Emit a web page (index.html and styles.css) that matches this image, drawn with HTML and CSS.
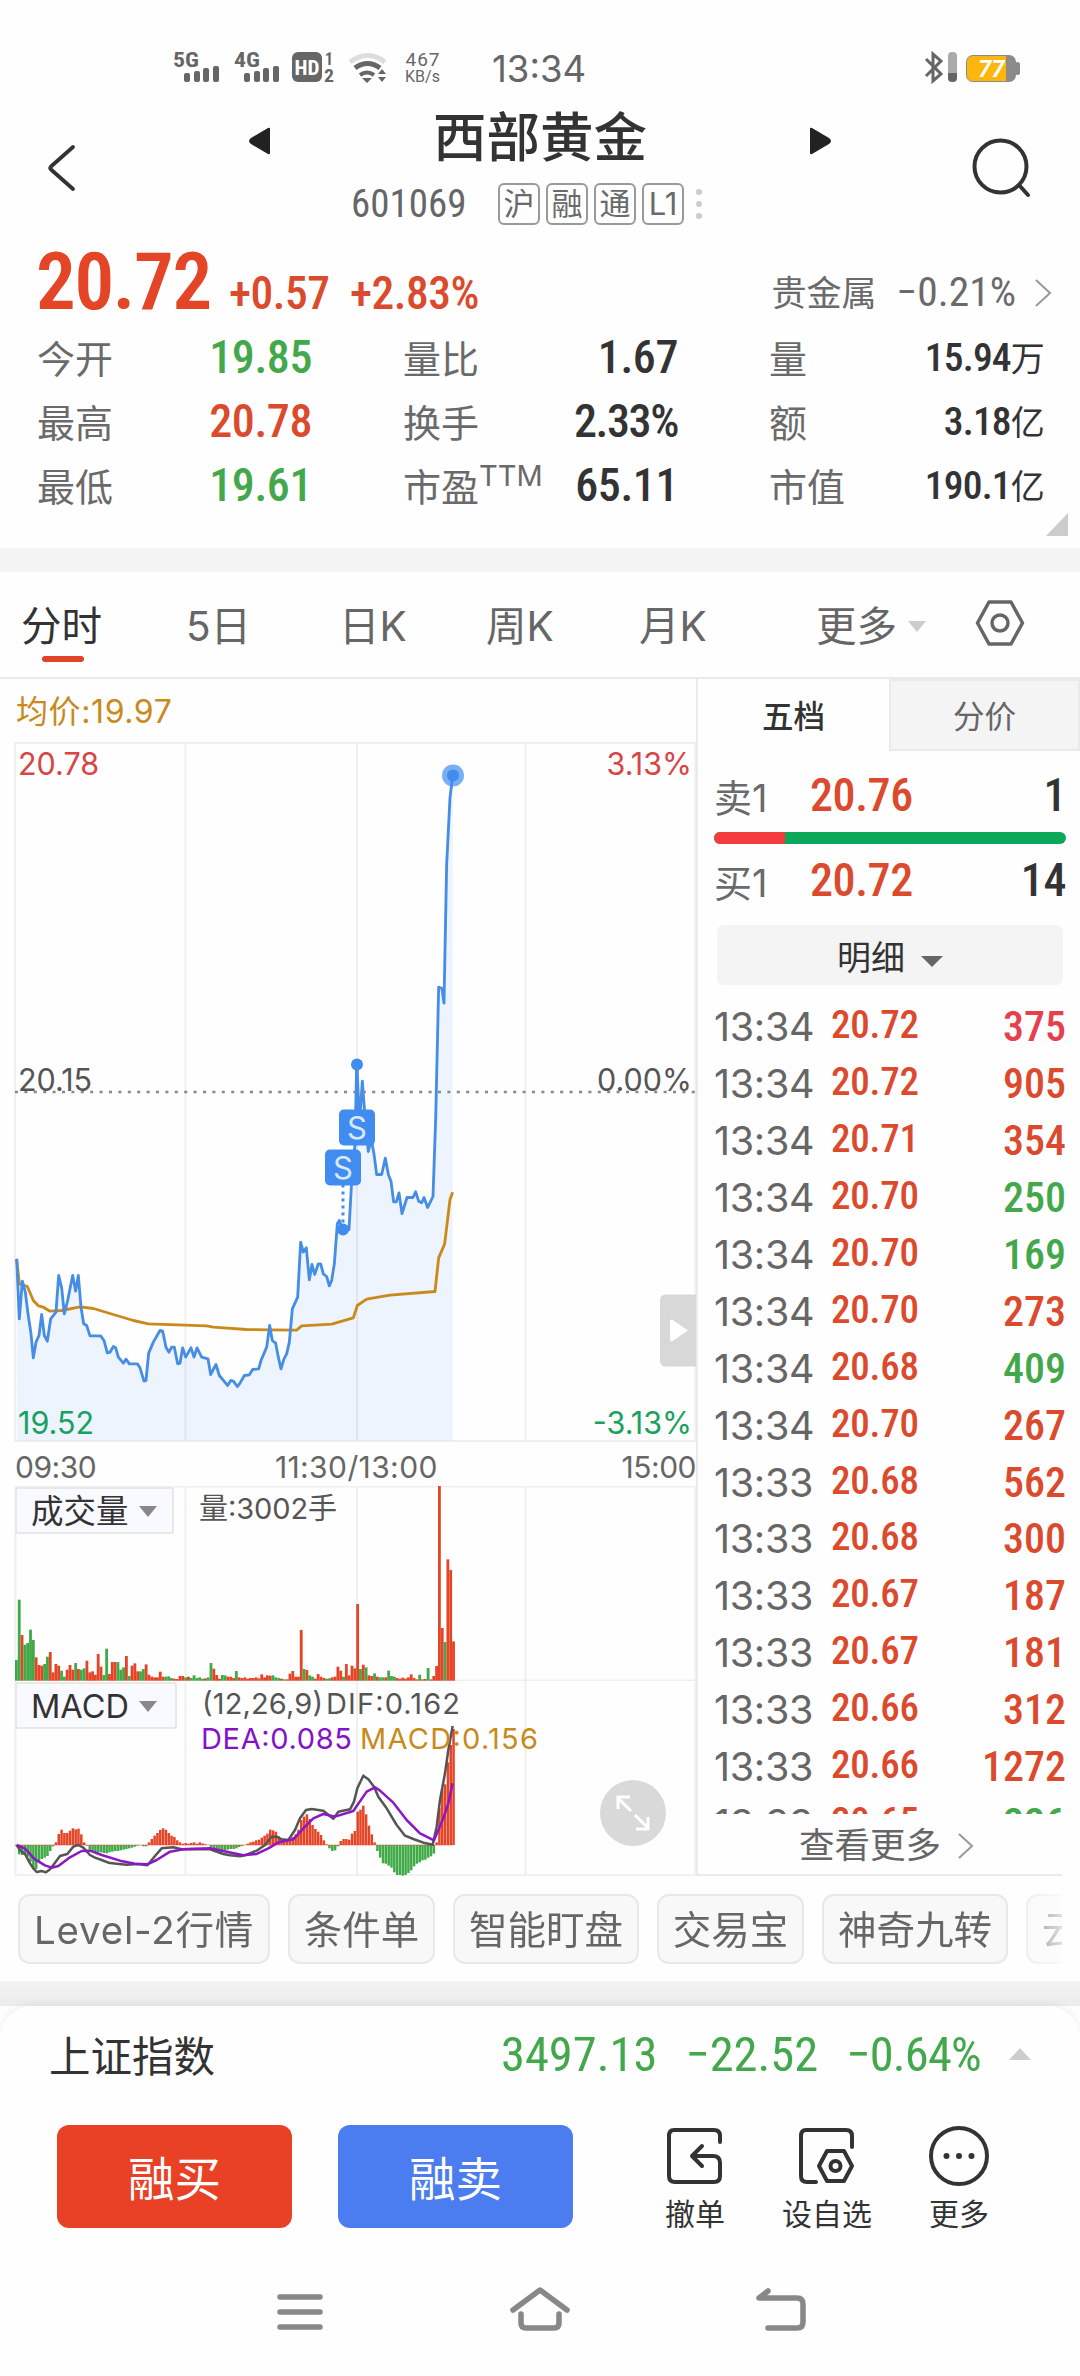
FILE: index.html
```html
<!DOCTYPE html>
<html lang="zh">
<head>
    <meta charset="UTF-8">
    <meta name="viewport" content="width=device-width, initial-scale=1.0">
    <title>西部黄金 601069</title>
    <link rel="stylesheet" href="styles.css">
</head>
<body>
    <div id="statusbar">
        <svg class="status-left" width="270" height="40" viewBox="172 46 270 40">
            <g fill="#666" class="status-bold">
                <text x="173" y="67" font-size="21" textLength="26" lengthAdjust="spacingAndGlyphs">5G</text>
                <rect x="184" y="73" width="6" height="9" rx="2"/><rect x="194" y="71" width="6" height="11" rx="2"/><rect x="203" y="68" width="6" height="14" rx="2"/><rect x="213" y="66" width="6" height="16" rx="2"/>
                <text x="234" y="67" font-size="21" textLength="26" lengthAdjust="spacingAndGlyphs">4G</text>
                <rect x="244" y="73" width="6" height="9" rx="2"/><rect x="254" y="71" width="6" height="11" rx="2"/><rect x="263" y="68" width="6" height="14" rx="2"/><rect x="273" y="66" width="6" height="16" rx="2"/>
                <rect x="292" y="52" width="30" height="30" rx="6"/>
                <text x="294.500" y="74.500" font-size="21" fill="#fff" textLength="25" lengthAdjust="spacingAndGlyphs">HD</text>
                <text x="325" y="65" font-size="18" textLength="8" lengthAdjust="spacingAndGlyphs">1</text>
                <text x="324" y="82" font-size="18" textLength="10" lengthAdjust="spacingAndGlyphs">2</text>
            </g>
            <g fill="none" stroke="#666" stroke-width="5">
                <path d="M350 62q18 -13 35 0" stroke="#ddd"/>
                <path d="M355 68q12.500 -9 25 0"/>
                <path d="M360 75q7 -5 14 0" stroke-width="4"/>
            </g>
            <path fill="#666" d="M362 78h10l-5 5zM378 74l4 -5l4 5zM378 77l4 5l4 -5z"/>
            <g fill="#666" class="status-thin">
                <text x="405.500" y="66" font-size="19" textLength="34">467</text>
                <text x="405" y="82" font-size="16" textLength="35">KB/s</text>
            </g>
        </svg>
        <div class="clock">13:34</div>
        <svg class="status-right" width="100" height="40" viewBox="922 46 100 40">
            <path d="M926 59l15 15l-8 7v-27l8 7l-15 15" fill="none" stroke="#666" stroke-width="3"/>
            <rect x="948" y="52" width="9" height="30" rx="4" fill="#aaa"/>
            <path d="M948 73h9v5q0 4 -4.500 4t-4.500 -4z" fill="#666"/>
            <rect x="966" y="55" width="50" height="27" rx="7" fill="#8a8a8a"/>
            <rect x="1015" y="62" width="5" height="13" rx="2.500" fill="#8a8a8a"/>
            <path d="M973 56h33v25h-33q-6 0 -6 -6v-13q0 -6 6 -6z" fill="#fdb60d"/>
            <text x="978" y="77" font-size="24" class="battery">77</text>
        </svg>
    </div>

    <div id="header">
        <svg width="40" height="60" viewBox="42 138 40 60"><path d="M73 147L51 166.500q-1.500 1.500 0 3L73 189" fill="none" stroke="#333" stroke-width="3.800" stroke-linecap="round"/></svg>
        <div class="title-box">
            <div class="title-row">
                <svg width="22" height="28" viewBox="0 0 22 28"><path d="M21 2v24q0 2-2 1L2 17q-4-3 0-6L19 1q2-1 2 1z" fill="#222"/></svg>
                <h1>西部黄金</h1>
                <svg width="22" height="28" viewBox="0 0 22 28"><path d="M1 2v24q0 2 2 1L20 17q4-3 0-6L3 1Q1 0 1 2z" fill="#222"/></svg>
            </div>
            <div class="code-row">
                <span class="code">601069</span>
                <span class="tag">沪</span><span class="tag">融</span><span class="tag">通</span><span class="tag">L1</span>
                <span class="dots"><i></i><i></i><i></i></span>
            </div>
        </div>
        <svg width="64" height="64" viewBox="970 136 64 64" fill="none" stroke="#333" stroke-width="4" stroke-linecap="round"><circle cx="1000.500" cy="166.500" r="26"/><path d="M1019 185l9 10"/></svg>
    </div>

    <div id="quote">
        <div class="price-row">
            <span class="price">20.72</span>
            <span class="chg">+0.57</span>
            <span class="chg">+2.83%</span>
            <div class="sector"><span>贵金属</span><b>−0.21%</b>
                <svg width="18" height="28" viewBox="0 0 18 28"><path d="M2 1l14 13L2 27" fill="none" stroke="#999" stroke-width="2"/></svg>
            </div>
        </div>
        <div class="stats">
            <div><span>今开</span><b class="green">19.85</b></div>
            <div><span>量比</span><b>1.67</b></div>
            <div><span>量</span><b class="small">15.94<em>万</em></b></div>
            <div><span>最高</span><b class="red">20.78</b></div>
            <div><span>换手</span><b class="pct">2.33%</b></div>
            <div><span>额</span><b class="small">3.18<em>亿</em></b></div>
            <div><span>最低</span><b class="green">19.61</b></div>
            <div><span>市盈<sup>TTM</sup></span><b>65.11</b></div>
            <div><span>市值</span><b class="small">190.1<em>亿</em></b></div>
        </div>
        <div class="corner"></div>
    </div>

    <div id="tabs">
        <div class="active">分时</div>
        <div>5日</div>
        <div>日K</div>
        <div>周K</div>
        <div>月K</div>
        <div class="more">更多<i></i></div>
        <svg width="50" height="48" viewBox="0 0 50 48" fill="none" stroke="#666" stroke-width="3.500" stroke-linejoin="round"><path d="M14 3h22l11.500 21L36 45H14L2.500 24z"/><circle cx="25" cy="24" r="8"/></svg>
    </div>

    <div id="main">
        <div class="charts">
            <div class="avg">均价:19.97</div>
            <svg class="block" width="696" height="700" viewBox="0 741.500 696 700">
                <g class="grid"><rect x="15" y="742.500" width="680.500" height="698"/><path d="M185.500 742v698M357 742v698M525.500 742v698"/></g>
                <g id="price"></g>
                <path d="M15 1091.500H696" stroke="#888" stroke-width="2.500" stroke-dasharray="3 6.400"/>
                <g fill="#408cf0">
                    <circle cx="453" cy="775" r="11" opacity=".7"/><circle cx="453" cy="775" r="6"/>
                    <circle cx="357" cy="1064" r="6"/><circle cx="343" cy="1229" r="6"/>
                    <path d="M357 1064v50" stroke="#408cf0" stroke-width="3"/>
                    <path d="M343 1184v44" stroke="#408cf0" stroke-width="3" stroke-dasharray="3 4"/>
                    <rect x="339" y="1109" width="36" height="36" rx="5"/>
                    <rect x="325" y="1149" width="36" height="36" rx="5"/>
                </g>
                <g class="smark"><text x="357" y="1138">S</text><text x="343" y="1178">S</text></g>
                <g class="axis">
                    <text x="18" y="774" fill="#d84545">20.78</text>
                    <text x="692" y="774" fill="#d84545" text-anchor="end">3.13%</text>
                    <text x="18" y="1090">20.15</text>
                    <text x="692" y="1090" text-anchor="end">0.00%</text>
                    <text x="18" y="1433" fill="#19a15f">19.52</text>
                    <text x="692" y="1433" fill="#19a15f" text-anchor="end">-3.13%</text>
                </g>
                <path d="M666 1294h30v72h-30q-6 0-6-6v-60q0-6 6-6z" fill="#d8d8d8"/>
                <path d="M672 1319l16 11l-16 11q-2 0-2-2v-18q0-2 2-2z" fill="#fff"/>
            </svg>
            <div class="times"><span>09:30</span><span>11:30/13:00</span><span>15:00</span></div>
            <div class="panel">
                <div class="select">成交量<i></i></div>
                <svg class="block" width="696" height="195" viewBox="0 1486 696 195">
                    <g class="grid"><path d="M15.500 1486V1681M185.500 1486v195M357 1486v195M525.500 1486v195M695.500 1486v195M15 1486.500H696M15 1680.500H696"/></g>
                    <g id="volume"></g>
                    <text x="199" y="1519" class="legend" textLength="138">量:3002手</text>
                </svg>
            </div>
            <div class="panel">
                <div class="select macd">MACD<i></i></div>
                <svg class="block" width="696" height="195" viewBox="0 1681 696 195">
                    <g class="grid"><path d="M15.500 1681V1876M185.500 1681v195M357 1681v195M525.500 1681v195M695.500 1681v195M15 1875.300H696"/></g>
                    <g id="macd"></g>
                    <g class="legend">
                        <text x="202" y="1714" textLength="121">(12,26,9)</text>
                        <text x="326" y="1714" textLength="134">DIF:0.162</text>
                        <text x="201" y="1749" fill="#8512c9" textLength="151">DEA:0.085</text>
                        <text x="360" y="1749" fill="#c98a1b" textLength="178">MACD:0.156</text>
                    </g>
                    <circle cx="633" cy="1813" r="33" fill="#d9d9d9"/>
                    <path d="M631 1811l-13-13M618 1809v-12h12M635 1815l13 13M648 1817v12h-12" fill="none" stroke="#fff" stroke-width="3"/>
                </svg>
            </div>
        </div>

        <div class="side">
            <div class="side-tabs"><div>五档</div><div class="off">分价</div></div>
            <div class="level"><span>卖1</span><b class="red">20.76</b><b class="num">1</b></div>
            <div class="ratio"><i></i></div>
            <div class="level"><span>买1</span><b class="red">20.72</b><b class="num">14</b></div>
            <div class="detail">明细<i></i></div>
            <div class="trades" id="trades"></div>
            <div class="see-more">查看更多<svg width="18" height="26" viewBox="0 0 18 26"><path d="M2 1l13 12L2 25" fill="none" stroke="#999" stroke-width="2"/></svg></div>
        </div>
    </div>

    <div id="chips">
        <div class="w1">Level-2行情</div>
        <div class="w2">条件单</div>
        <div class="w3">智能盯盘</div>
        <div class="w2">交易宝</div>
        <div class="w3">神奇九转</div>
        <div class="w2">云参数</div>
    </div>

    <div id="band"></div>

    <div id="bottom">
        <div class="index-row">
            <span>上证指数</span>
            <b>3497.13</b><b>−22.52</b><b class="pct">−0.64%</b>
            <i></i>
        </div>
        <div class="actions">
            <div class="btn buy">融买</div>
            <div class="btn sell">融卖</div>
            <div class="act">
                <svg width="60" height="62" viewBox="0 0 60 62"><path d="M55 17v-6q0-6-6-6H9q-5 0-5 6v40q0 6 6 6h39q6 0 6-6V38q0-7-7-7H28M37 21L27 31l10 10"/></svg>
                <span>撤单</span>
            </div>
            <div class="act">
                <svg width="60" height="62" viewBox="0 0 60 62"><path d="M55 22V11q0-6-6-6H9q-5 0-5 6v40q0 6 6 6h9M30 26h17l8 15l-8 15H30l-8-15z"/><circle cx="38.500" cy="41" r="5"/></svg>
                <span>设自选</span>
            </div>
            <div class="act">
                <svg width="62" height="62" viewBox="0 0 62 62"><circle cx="31" cy="31" r="28"/><g class="fill"><circle cx="18.500" cy="31" r="3"/><circle cx="31" cy="31" r="3"/><circle cx="43.500" cy="31" r="3"/></g></svg>
                <span>更多</span>
            </div>
        </div>
    </div>

    <div id="nav">
        <svg width="48" height="46" viewBox="0 0 48 46"><path d="M4 11h40M4 26h40M4 41h40"/></svg>
        <svg width="62" height="46" viewBox="0 0 62 46"><path d="M4 24L31 4l27 20M12 28v9q0 5 5 5h28q5 0 5-5v-9"/></svg>
        <svg width="52" height="46" viewBox="0 0 52 46"><path d="M13 5L4 12h38q6 0 6 6v18q0 6-6 6H13"/></svg>
    </div>

    <script src="script.js"></script>
</body>
</html>
```
FILE: styles.css
```css
*{
    box-sizing: border-box;
}
body{
    margin: 0;
    width: 1080px;
    height: 2376px;
    overflow: hidden;
    background: #fefefe;
    color: #333;
    font-family: Inter, "Noto Sans CJK SC", sans-serif;
}
b, .price, .chg, .code{
    font-family: "Roboto Condensed", "Noto Sans CJK SC", sans-serif;
    font-weight: 500;
}
i, em{
    font-style: normal;
}
svg{
    flex: none;
}
.block{
    display: block;
}
.red{
    color: #dc4a2d;
}
.green{
    color: #43a84b;
}

/* status bar */
#statusbar{
    height: 100px;
    padding: 46px 58px 0 172px;
    display: flex;
}
.status-bold{
    font-family: "Roboto Condensed";
    font-weight: 700;
}
.status-thin{
    font-family: Roboto;
}
.clock{
    margin-left: 50px;
    font-size: 36.5px;
    line-height: 46px;
    color: #666;
}
.status-right{
    margin-left: auto;
}
.battery{
    fill: #fff;
    font-family: Roboto;
    font-weight: 700;
    font-style: italic;
}

/* header */
#header{
    height: 142px;
    padding: 0 46px 0 42px;
    display: flex;
}
#header > svg:first-child{
    margin-top: 38px;
}
#header > svg:last-child{
    margin: 36px 0 0 auto;
}
.title-box{
    width: 582px;
    margin-left: 167px;
}
.title-row{
    height: 76px;
    display: flex;
    align-items: center;
    justify-content: space-between;
}
.title-row svg{
    margin-top: 6px;
}
h1{
    margin: 0;
    font-size: 53.5px;
    font-weight: 500;
    line-height: 76px;
}
.code-row{
    display: flex;
    align-items: center;
    height: 56px;
    padding-left: 102px;
}
.code{
    width: 147px;
    font-size: 39px;
    font-weight: 400;
    color: #666;
}
.tag{
    width: 42px;
    height: 42px;
    margin-right: 6px;
    border: 2px solid #999;
    border-radius: 6px;
    font-size: 31px;
    line-height: 38px;
    text-align: center;
    color: #6a6a6a;
}
.dots{
    margin-left: 6px;
    display: flex;
    flex-direction: column;
    gap: 6px;
}
.dots i{
    width: 6px;
    height: 6px;
    border-radius: 3px;
    background: #ccc;
}

/* quote */
#quote{
    height: 306px;
    position: relative;
}
.price-row{
    height: 83px;
    padding: 0 28px 0 36px;
    display: flex;
    align-items: baseline;
    line-height: 80px;
}
.price{
    width: 193px;
    font-size: 79px;
    font-weight: 600;
    letter-spacing: -1.3px;
    color: #e34526;
}
.chg{
    width: 121px;
    font-size: 45.5px;
    letter-spacing: -.5px;
    color: #dc4a2d;
}
.sector{
    align-self: flex-start;
    margin-left: auto;
    margin-top: 30px;
    display: flex;
    align-items: center;
    font-size: 35px;
    line-height: 42px;
    color: #6a6a6a;
}
.sector b{
    margin: -3px 18px 0 20px;
    font-size: 41.5px;
    font-weight: 400;
}
.stats{
    padding-left: 37px;
    display: grid;
    grid-template-columns: repeat(3, 275px);
    column-gap: 91px;
    grid-auto-rows: 64px;
}
.stats div{
    display: flex;
    justify-content: space-between;
    line-height: 65px;
}
.stats span{
    font-size: 38px;
    line-height: 68px;
    color: #6a6a6a;
}
.stats b{
    font-size: 46px;
    letter-spacing: -.4px;
}
.stats .pct{
    letter-spacing: -1.4px;
}
.stats .small{
    font-size: 39.5px;
    letter-spacing: -.8px;
}
.stats em{
    font-size: 34px;
    font-weight: 400;
}
sup{
    font-size: 29px;
    line-height: 0;
    vertical-align: 15px;
}
.corner{
    position: absolute;
    right: 12px;
    bottom: 12px;
    border-bottom: 23px solid #ccc;
    border-left: 22px solid transparent;
}

/* period tabs */
#tabs{
    height: 131px;
    border-top: 24px solid #f4f4f4;
    border-bottom: 2px solid #eaeaea;
    padding-left: 21px;
    display: grid;
    grid-template-columns: 165px 153px 147px 153px 177px 159px 50px;
    align-items: center;
    font-size: 40.5px;
    line-height: 110px;
    color: #666;
}
#tabs div{
    height: 105px;
}
#tabs .active{
    position: relative;
    color: #333;
}
#tabs .active::after{
    content: "";
    position: absolute;
    left: 21px;
    bottom: 15px;
    width: 42px;
    height: 6px;
    border-radius: 3px;
    background: #e24326;
}
#tabs svg{
    margin-top: -4px;
}
#tabs .more i, .select i, .detail i{
    display: inline-block;
    border: 9px solid transparent;
    border-top: 11px solid #ccc;
    border-bottom: 0;
    margin-left: 11px;
    vertical-align: 9px;
}

/* charts */
#main{
    height: 1197px;
    display: flex;
}
.charts{
    width: 696px;
}
.avg{
    height: 62.5px;
    padding-left: 16px;
    font-size: 32px;
    line-height: 66px;
    letter-spacing: .6px;
    color: #c98a1b;
}
.grid{
    fill: none;
    stroke: #efefef;
    stroke-width: 2;
}
.axis{
    font-size: 30.5px;
    fill: #555;
}
.smark{
    font-size: 31px;
    fill: #d9e8fc;
    text-anchor: middle;
}
.legend{
    font-size: 29px;
    fill: #555;
}
.times{
    height: 44.5px;
    padding: 0 0 0 15px;
    display: flex;
    justify-content: space-between;
    font-size: 30px;
    line-height: 50px;
    letter-spacing: -.5px;
    color: #666;
}
.times span:nth-child(2){
    margin-right: 5px;
    letter-spacing: .4px;
}
.panel{
    position: relative;
}
.select{
    position: absolute;
    left: 15px;
    top: 1px;
    width: 159px;
    height: 47px;
    padding-left: 14px;
    border: 2px solid #e8e8e8;
    border-radius: 3px;
    background: #f9faff;
    font-size: 32.5px;
    line-height: 46px;
}
.macd{
    width: 162px;
}
#tabs + #main .select i{
    border-top-color: #888;
    margin-left: 10px;
    vertical-align: 6px;
}

/* order book */
.side{
    width: 384px;
    border-left: 2px solid #eaeaea;
    position: relative;
}
.side-tabs{
    height: 72px;
    display: flex;
    font-size: 31.5px;
    line-height: 76px;
    text-align: center;
    font-weight: 500;
}
.side-tabs div{
    width: 191px;
}
.side-tabs .off{
    line-height: 72px;
    border: 2px solid #eaeaea;
    background: #f4f4f4;
    color: #666;
    font-weight: 400;
}
.level{
    height: 81px;
    padding: 7px 14px 0 16px;
    display: flex;
    align-items: center;
}
.level span{
    width: 96px;
    font-size: 38px;
    color: #6a6a6a;
}
.level b{
    font-size: 46px;
    letter-spacing: -.4px;
}
.level .num{
    margin-left: auto;
}
.ratio{
    width: 352px;
    height: 12px;
    margin-left: 16px;
    border-radius: 6px;
    background: #0ba85a;
    overflow: hidden;
}
.ratio i{
    display: block;
    width: 71px;
    height: 12px;
    background: #f43c3f;
}
.ratio + .level{
    height: 81px;
    padding-top: 0;
    padding-bottom: 9px;
}
.detail{
    width: 346px;
    height: 60px;
    margin-left: 19px;
    border-radius: 6px;
    background: #f4f4f4;
    text-align: center;
    font-size: 34px;
    line-height: 65px;
}
.detail i{
    border-width: 11px 11px 0;
    border-top-color: #666;
    margin-left: 16px;
    vertical-align: 3px;
}
.trades{
    height: 829px;
    padding: 12px 14px 0 16px;
    overflow: hidden;
}
.trade{
    height: 56.95px;
    display: flex;
    line-height: 57px;
}
.trade span{
    width: 117px;
    font-size: 39.5px;
    line-height: 61px;
    letter-spacing: -.3px;
    color: #666;
}
.trade b{
    font-size: 39px;
    letter-spacing: -.2px;
}
.trade .qty{
    margin-left: auto;
    font-size: 42px;
    line-height: 59px;
    letter-spacing: 0;
}
.trade .pink{
    color: #e5404c;
}
.see-more{
    height: 62px;
    width: 364px;
    padding-left: 101px;
    border-bottom: 2px solid #eaeaea;
    font-size: 35.5px;
    line-height: 64px;
    color: #666;
}
.see-more svg{
    margin-left: 16px;
    vertical-align: -1px;
}

/* chips */
#chips{
    width: 1062px;
    height: 105px;
    padding: 18px 0 0 18px;
    display: flex;
    gap: 18px;
    overflow: hidden;
    -webkit-mask: linear-gradient(to right, #000 1008px, transparent 1075px);
}
#chips div{
    flex: none;
    height: 70px;
    border: 2px solid #e8e8e8;
    border-radius: 12px;
    background: #f8f8f8;
    text-align: center;
    font-size: 38.5px;
    line-height: 69px;
    color: #666;
    white-space: nowrap;
}
#chips .w1{
    width: 252px;
    letter-spacing: .8px;
}
#chips .w2{
    width: 147px;
}
#chips .w3{
    width: 186px;
}
#band{
    height: 25px;
    background: linear-gradient(#f3f3f3, #ececec);
}

/* bottom card */
#bottom{
    height: 252px;
    border-radius: 32px 32px 0 0;
    background: #fefefe;
    box-shadow: 0 -2px 8px rgba(0,0,0,.06);
    clip-path: inset(-12px 0 0 0);
}
.index-row{
    height: 98px;
    padding: 0 49px 2px 49px;
    display: flex;
    align-items: center;
    font-size: 41.5px;
}
.index-row span{
    width: 458px;
}
.index-row b{
    margin-right: 28px;
    font-size: 48.5px;
    font-weight: 400;
    color: #43a84b;
}
.index-row .pct{
    letter-spacing: -.8px;
}
.index-row i{
    margin-left: auto;
    border: 11px solid transparent;
    border-bottom: 12px solid #ccc;
    border-top: 0;
}
.actions{
    padding: 21px 0 0 57px;
    display: flex;
}
.btn{
    width: 235px;
    height: 103px;
    margin-right: 46px;
    border-radius: 12px;
    font-size: 46.5px;
    line-height: 108px;
    text-align: center;
    color: #fff;
}
.buy{
    background: #e84125;
}
.sell{
    background: #4b7df1;
}
.act{
    width: 132px;
    text-align: center;
    font-size: 30px;
    line-height: 38px;
}
.act:nth-child(3){
    margin-left: 10px;
}
.act svg{
    display: block;
    margin: 0 auto 8px;
    fill: none;
    stroke: #333;
    stroke-width: 4;
    stroke-linejoin: round;
    stroke-linecap: round;
}
.act .fill{
    fill: #333;
    stroke: none;
}

/* system nav */
#nav{
    height: 118px;
    padding: 28px 273px 0 276px;
    display: flex;
    justify-content: space-between;
}
#nav svg{
    fill: none;
    stroke: #888;
    stroke-width: 5.5;
    stroke-linecap: round;
    stroke-linejoin: round;
}
```
FILE: script.js
```js
const RED = "#e54427";
const GREEN = "#41aa48";
const STEP = 2.82;

// price line, three units per pixel, origin at y = 1200
let line = "50,175 58,355 67,242 76,275 84,340 93,400 100,472 108,425 117,405 125,342 133,405 142,422 152,355 168,335 176,225 185,262 193,340 203,300 218,225 227,272 235,225 243,320 251,370 260,375 270,406 302,406 312,420 322,457 330,455 340,438 347,442 355,470 370,488 378,476 388,490 412,490 420,502 432,542 438,540 446,458 460,425 480,390 488,392 498,440 507,455 515,440 523,440 533,490 540,488 548,442 557,470 573,442 582,470 591,442 605,470 624,475 632,522 648,492 658,525 672,542 683,555 692,540 700,542 712,558 720,548 733,525 748,523 758,507 776,505 783,480 800,440 809,375 817,420 827,428 835,470 843,505 852,475 860,460 868,425 877,325 893,290 902,125 910,155 919,142 928,238 936,192 944,222 955,190 962,190 970,220 980,228 988,256 995,240 1003,190 1012,70 1018,60 1028,90 1047,87 1055,-58 1065,-168 1070,-409 1079,-237 1087,-358 1094,-264 1105,-147 1114,-182 1122,-140 1130,-78 1145,-78 1156,-127 1165,-78 1173,-58 1181,4 1189,4 1197,-23 1206,39 1221,-9 1239,-9 1247,-26 1256,2 1265,7 1272,-9 1283,21 1299,-12 1307,-244 1316,-640 1326,-636 1332,-592 1340,-1008 1350,-1208 1358,-1274";
let avg = "50,175 58,250 82,258 100,300 115,316 130,320 150,332 185,330 240,319 280,324 340,342 400,360 445,370 620,376 640,380 740,387 810,388 890,389 905,376 995,371 1060,352 1072,315 1100,296 1170,284 1305,273 1316,172 1334,130 1350,-3 1358,-25";

document.getElementById("price").innerHTML =
    `<g transform="translate(0 1200) scale(.33333)" fill="none" stroke-width="8.5" stroke-linejoin="round">
        <polygon points="50,720 ${line} 1358,720" fill="#408cf0" fill-opacity=".09"/>
        <polyline points="${avg}" stroke="#c98a1b"/>
        <polyline points="${line}" stroke="#468de6"/>
    </g>`;

// volume per minute, negative = falling
let vol = [-62,-243,137,-108,-113,-153,-122,70,47,45,-50,-72,86,25,50,45,-30,-12,33,47,33,-53,35,-33,-37,60,25,28,18,80,42,-17,-96,20,56,56,-56,-33,-40,74,-14,45,52,28,-28,-35,49,18,12,10,10,27,12,-12,-13,-8,6,5,14,14,-10,12,-8,-16,-8,-10,-6,7,-10,-53,36,17,6,-17,-16,12,12,8,-29,10,8,10,6,8,8,10,7,19,10,16,15,-16,-10,-8,6,-4,4,21,29,12,12,152,-35,32,-16,-12,6,20,12,8,-6,-7,10,12,42,30,-12,50,16,45,37,230,-35,48,-40,16,14,-22,12,-10,-10,10,-30,-14,-12,8,6,9,6,10,19,8,4,-18,4,5,-38,4,14,44,584,158,-116,364,332,118];
let bars = "";
vol.forEach((v, i) => {
    let h = Math.abs(v) / 3;
    bars += `<rect x="${15 + i * STEP}" y="${1680.7 - h}" width="${STEP}" height="${h}" fill="${v < 0 ? GREEN : RED}"/>`;
});
document.getElementById("volume").innerHTML = bars;

let macd = [-2,-28,-30,-30,-35,-50,-68,-72,-50,-42,-38,-33,-18,-4,8,33,46,36,36,43,50,47,49,32,8,-2,-14,-18,-22,-22,-22,-24,-25,-22,-20,-18,-18,-16,-14,-12,-10,-8,-5,-2,0,-4,-4,8,18,28,36,45,50,46,36,28,24,14,8,4,6,4,6,8,4,8,5,2,0,-8,-16,-18,-20,-18,-16,-14,-12,-12,-10,-6,-3,0,4,8,10,14,16,22,28,34,46,44,40,26,16,12,12,16,24,32,46,75,85,92,78,60,48,40,30,14,2,-10,-18,-16,-4,12,18,18,16,34,42,100,106,118,92,58,32,8,-18,-38,-55,-56,-62,-68,-82,-90,-90,-92,-90,-84,-76,-64,-56,-52,-46,-44,-38,-34,-26,8,112,166,182,248,300,348];
bars = "";
macd.forEach((v, i) => {
    let h = Math.abs(v) / 3;
    bars += `<rect x="${15.2 + i * STEP}" y="${v < 0 ? 1845 : 1845 - h}" width="2.5" height="${h}" fill="${v < 0 ? GREEN : RED}"/>`;
});
let dif = "20,795 30,810 45,822 60,850 70,865 80,876 95,873 108,877 120,868 135,848 150,828 172,822 190,800 205,795 220,803 240,825 255,833 275,840 295,848 320,851 350,854 385,852 412,856 435,828 455,805 490,802 515,808 560,807 600,808 640,822 660,826 690,829 710,824 740,812 765,795 785,770 800,770 815,778 835,780 855,750 870,715 888,690 905,687 940,692 955,704 970,716 985,695 1020,688 1032,665 1042,625 1060,587 1075,598 1092,620 1105,650 1130,685 1160,735 1185,767 1210,777 1240,788 1268,794 1280,740 1290,660 1305,580 1315,510 1328,438";
let dea = "20,795 45,806 75,838 105,856 125,863 145,858 180,832 215,813 240,812 275,825 330,842 375,851 412,853 440,840 480,815 520,808 600,805 650,815 700,826 740,822 775,805 805,787 850,778 880,745 910,715 940,702 975,710 1030,693 1070,635 1095,622 1110,632 1150,668 1190,720 1230,760 1272,781 1300,715 1315,670 1328,610";
document.getElementById("macd").innerHTML = bars +
    `<path d="M15 1845H453" stroke="${RED}" stroke-opacity=".5"/>
    <g transform="translate(10 1580) scale(.33333)" fill="none" stroke-width="7.5" stroke-linejoin="round">
        <polyline points="${dif}" stroke="#555"/>
        <polyline points="${dea}" stroke="#8c17c6"/>
    </g>`;

// time, price, quantity (negative = sell)
let trades = [
    ["13:34", "20.72", 375], ["13:34", "20.72", 905], ["13:34", "20.71", 354],
    ["13:34", "20.70", -250], ["13:34", "20.70", -169], ["13:34", "20.70", 273],
    ["13:34", "20.68", -409], ["13:34", "20.70", 267], ["13:33", "20.68", 562],
    ["13:33", "20.68", 300], ["13:33", "20.67", 187], ["13:33", "20.67", 181],
    ["13:33", "20.66", 312], ["13:33", "20.66", 1272], ["13:33", "20.65", -226]
];
document.getElementById("trades").innerHTML = trades.map((t, i) =>
    `<div class="trade"><span>${t[0]}</span><b class="red">${t[1]}</b><b class="qty ${t[2] < 0 ? "green" : i == 0 ? "pink" : "red"}">${Math.abs(t[2])}</b></div>`
).join("");
```
